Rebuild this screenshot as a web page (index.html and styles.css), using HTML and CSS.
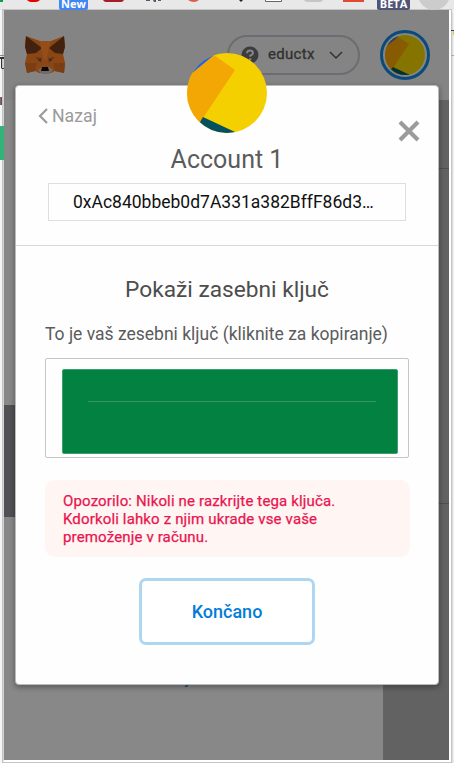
FILE: index.html
```html
<!DOCTYPE html>
<html lang="sl">
<head>
<meta charset="utf-8">
<title>MetaMask</title>
<link rel="stylesheet" href="styles.css">
</head>
<body>
<div class="browser">
  <svg class="toolbar" width="454" height="10" viewBox="0 0 454 10">
    <path fill="#0a9d4b" d="M0 0h3v2H0z"/>
    <path fill="#e60000" d="M27 0h13q-2 2-4 2h-5q-2 0-4-2z"/>
    <path fill="#a61c28" d="M103 0h21q-1 2-3 2h-15q-2 0-3-2z"/>
    <path fill="#555a66" d="M146 0h4v1h-4zM153 0h3v2h-2zM158 0h3v1h-3z"/>
    <path fill="#d85c4c" d="M188 0h11q-5 4-11 0z"/>
    <path fill="#222" d="M239 0h4l-2 2z"/>
    <path fill="#fff" stroke="#666" d="M265.500-2h16v3.500h-16z"/>
    <path fill="#c6c6c6" d="M304 0h19q-1 2-3 2h-13q-2 0-3-2z"/>
    <path fill="#e04a35" d="M343 0h21v2h-21z"/>
    <circle cx="434" cy="-6" r="16" fill="#ccc"/>
  </svg>
  <span class="tag tag-new">New</span>
  <span class="tag tag-beta">BETA</span>
  <svg class="page-edge" width="4" height="753" viewBox="0 0 4 753">
    <path fill="#888" d="M0 45h4v1H0z"/>
    <path fill="#333" d="M0 47h4v2H0zM1 49h1v9h2v1H2l-1-1z"/>
    <path fill="#b45a20" d="M0 87h1v8H0z"/>
    <path fill="#2b5f9e" d="M1 87h1v8H1z"/>
    <path fill="#32b377" d="M0 116h4v34H0z"/>
  </svg>
  <svg class="page-edge-right" width="3" height="753" viewBox="0 0 3 753">
    <path fill="#1b4f73" d="M0 20h3v1H0z"/>
    <path fill="#e8c545" d="M2 21h1v4H2z"/>
    <path fill="#aaa" d="M0 45h3v1H0z"/>
  </svg>
  <div class="popup">
    <header class="header">
      <svg class="fox" width="42" height="40" viewBox="0 0 42 40">
        <path fill="#8a4715" d="M2 1l14 5h11L40 1l1 10-2 8 2 9-1 10-9-2-4 2H15l-4-2-8 2-2-10 2-9-2-8z"/>
        <path fill="#42220f" d="M2 1l16 12-6 5-9 1-2-7zM40 1L25 13l6 5 8 1 2-7z"/>
        <path fill="#7b3d13" d="M1 28l12 0-2 8-8 2zM41 28H29l2 8 9 2z"/>
        <path fill="#954e17" d="M16 6h11l-2 7-3 12h-2l-3-12z"/>
        <path fill="#6e3214" d="M11 22l7 1-1 5zM31 22l-7 1 1 5z"/>
        <path fill="#33302f" d="M14 24l3 0v2l-2 0zM28 24l-3 0v2l2 0z"/>
        <path fill="#776a63" d="M14 35l4-3h7l4 3-4 4h-7z"/>
        <path fill="#090909" d="M18 32h6l1 4h-8z"/>
      </svg>
      <div class="network">
        <svg width="18" height="18" viewBox="0 0 18 18"><circle cx="9" cy="9" r="8.500" fill="#3c3c3e"/><path d="M6 7.200Q6.200 4.500 9 4.500Q12 4.500 12 7Q12 8.500 9.300 9.700V10.800M9.300 12.300V14" fill="none" stroke="#858585" stroke-width="2"/></svg>
        <span class="network-name">eductx</span>
        <svg width="14" height="9" viewBox="0 0 14 9"><path d="M1 1l6 6 6-6" fill="none" stroke="#333" stroke-width="1.500"/></svg>
      </div>
      <svg class="avatar" width="50" height="50" viewBox="0 0 50 50">
        <defs><clipPath id="small"><circle cx="25" cy="25" r="20"/></clipPath></defs>
        <circle cx="25" cy="25" r="23.500" fill="#858585" stroke="#0a4b7c" stroke-width="3"/>
        <g clip-path="url(#small)"><path fill="#857500" d="M0 0h50v50H0z"/><path fill="#885a02" d="M0 16L18 7l11 7L13 38 0 42z"/><path fill="#203a7e" d="M4 18L18 7 14 3 0 8z"/><path fill="#053136" d="M13 37l17 8-4 5-17-8z"/></g>
      </svg>
    </header>
    <div class="content">
      <div class="wallet"><div class="wallet-dark"></div><div class="wallet-link">Dodaj žeton</div></div>
      <div class="sidebar"><div class="row row-one"></div><div class="row row-two"></div></div>
    </div>
  </div>
  <main class="modal">
    <svg class="identicon" width="80" height="80" viewBox="0 0 80 80">
      <defs><clipPath id="large"><circle cx="40" cy="40" r="40"/></clipPath></defs>
      <g clip-path="url(#large)"><path fill="#f5d000" d="M0 0h80v80H0z"/><path fill="#f3a704" d="M0 23L27 2l21 15L16 65 12 70 0 70z"/><path fill="#2362e8" d="M4 21L27 2 20 0 0 16z"/><path fill="#04505f" d="M16 64l32 15-5 5-33-10z"/></g>
    </svg>
    <section class="account">
      <div class="back"><svg width="10" height="16" viewBox="0 0 10 16"><path d="M9 1L2 8l7 7" fill="none" stroke="#9b9b9b" stroke-width="2.200"/></svg><span class="back-text">Nazaj</span></div>
      <svg class="close" width="22" height="22" viewBox="0 0 22 22"><path d="M2 2l18 18M20 2L2 20" fill="none" stroke="#9b9b9b" stroke-width="4.200"/></svg>
      <h1 class="name"><span>Account 1</span></h1>
      <div class="address"><span>0xAc840bbeb0d7A331a382BffF86d3…</span></div>
    </section>
    <section class="key">
      <h2 class="title"><span>Pokaži zasebni ključ</span></h2>
      <p class="label"><span>To je vaš zesebni ključ (kliknite za kopiranje)</span></p>
      <div class="key-box"><div class="redaction"><div class="redaction-line"></div></div></div>
      <p class="warning">Opozorilo: Nikoli ne razkrijte tega ključa.<br>Kdorkoli lahko z njim ukrade vse vaše<br>premoženje v računu.</p>
      <button class="done">Končano</button>
    </section>
  </main>
</div>
</body>
</html>
```
FILE: styles.css
```css
* { box-sizing: border-box; }
body { margin: 0; font-family: Roboto, sans-serif; }
h1, h2, p { margin: 0; font-weight: 400; }
svg { display: block; flex: none; }
.browser { position: relative; width: 454px; height: 763px; overflow: hidden; background: #f4f5f5; }
.toolbar { background: #e8e8e8; }
.tag { position: absolute; top: 0; height: 10px; color: #fff; font: bold 11px/8px "Open Sans", sans-serif; text-align: center; border-radius: 0 0 2px 2px; }
.tag-new { left: 59px; width: 29px; background: #4286f5; }
.tag-beta { left: 377px; width: 33px; background: #515575; }
.page-edge { position: absolute; left: 0; top: 10px; }
.page-edge-right { position: absolute; right: 0; top: 10px; }
.popup { width: 448px; height: 752px; margin-left: 3px; border: 1px solid #d0d2d3; border-right: 2px solid #fff; border-top: 0; border-bottom: 2px solid #fff; box-shadow: 0 0 0 1px #c4c4c4, 1px 2px 2px #aaa; }
.header { height: 90px; background: #848484; display: flex; padding: 20px 19px 0 20px; }
.fox { margin-top: 5px; }
.network { width: 133px; height: 40px; margin: 5px 20px 0 auto; border: 2px solid #6c6d72; border-radius: 20px; padding: 0 15px 0 12px; display: flex; align-items: center; }
.network-name { margin: 0 auto 2px 9px; font-size: 15px; letter-spacing: .3px; color: #303030; -webkit-text-stroke: .3px #303030; }
.content { display: flex; height: 660px; }
.wallet { width: 379px; background: #888; padding-top: 305px; }
.wallet-dark { height: 112px; background: #505055; }
.wallet-link { margin: 152px 0 0 144px; width: 45px; overflow: hidden; white-space: nowrap; font-size: 16px; line-height: 19px; color: #0a4b7c; }
.sidebar { flex: 1; background: #626262; padding-top: 68px; }
.row { border-top: 1px solid #505050; }
.row-one { height: 335px; }
.modal { position: absolute; left: 15px; top: 85px; width: 424px; height: 600px; background: #fefefe; border: 1px solid #bbb; border-radius: 4px; box-shadow: 0 2px 5px 1px rgba(0,0,0,.28); }
.identicon { position: absolute; left: 171px; top: -33px; }
.account { height: 160px; padding: 20px 32px 0; border-bottom: 1px solid #d8d8d8; }
.back { display: flex; align-items: center; height: 20px; margin-left: -10px; gap: 4px; color: #9b9b9b; font-size: 17.700px; }
.close { position: absolute; right: 18px; top: 34px; }
.name { margin-top: 19px; font-size: 25px; line-height: 30px; text-align: center; color: #5b5b5b; }
.address { margin-top: 8px; height: 38px; border: 1px solid #dedede; padding-left: 24px; line-height: 36px; font-size: 17.500px; color: #111; white-space: nowrap; }
.key { padding: 29px 29px 0; }
.title { text-align: center; font-size: 22.700px; line-height: 30px; color: #4d4d4d; }
.label { margin-top: 16px; font-size: 17.500px; line-height: 26px; color: #5b5b5b; white-space: nowrap; }
.key-box { margin-top: 11px; width: 364px; height: 100px; border: 1px solid #c5c5c5; border-radius: 2px; padding: 10px 10px 4px 16px; }
.redaction { height: 85px; background: #038141; border: 1px solid #3ba06f; border-radius: 2px; padding: 31px 21px 0 25px; }
.redaction-line { height: 1px; background: #35995f; }
.warning { margin-top: 22px; width: 365px; height: 77px; padding: 12px 18px; border-radius: 10px; background: #fff5f3; color: #e91550; font-size: 15px; letter-spacing: .15px; -webkit-text-stroke: .25px #e91550; line-height: 18px; white-space: nowrap; }
.done { display: block; width: 176px; height: 67px; margin: 21px 0 0 94px; padding: 0; border: 3px solid #afd6f1; border-radius: 7px; background: #fff; color: #037dd6; font: 500 18px Roboto, sans-serif; }
```
